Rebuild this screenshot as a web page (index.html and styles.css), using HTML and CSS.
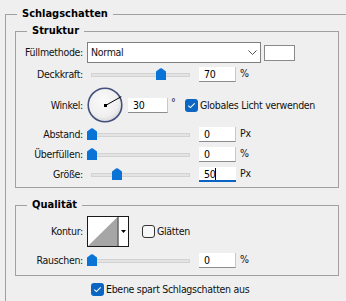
FILE: index.html
```html
<!DOCTYPE html>
<html lang="de">
<head>
<meta charset="utf-8">
<title>Schlagschatten</title>
<link rel="stylesheet" href="styles.css">
</head>
<body>
<fieldset class="group outer">
  <legend>Schlagschatten</legend>

  <fieldset class="group inner struktur">
    <legend>Struktur</legend>

    <div class="row r-fill">
      <span class="lbl">Füllmethode:</span>
      <div class="select">
        <span class="sel-text">Normal</span>
        <svg class="chev" width="9" height="5" viewBox="0 0 9 5"><polyline points="0.5,0.5 4.5,4.5 8.5,0.5" fill="none" stroke="#555" stroke-width="1"/></svg>
      </div>
      <div class="swatch"></div>
    </div>

    <div class="row r-num">
      <span class="lbl">Deckkraft:</span>
      <div class="slider">
        <div class="track"></div>
        <svg class="thumb" style="left:69px" width="10" height="12" viewBox="0 0 10 12"><path d="M4 0.6 Q5 0 6 0.6 L10 3.6 V12 H0 V3.6 Z" fill="#0a74d6"/></svg>
      </div>
      <div class="num">70</div>
      <span class="unit">%</span>
    </div>

    <div class="row r-angle">
      <span class="lbl">Winkel:</span>
      <svg class="dial" width="36" height="36" viewBox="0 0 36 36">
        <defs>
          <radialGradient id="dg" cx="45%" cy="40%" r="60%">
            <stop offset="0" stop-color="#fbfbfb"/>
            <stop offset="0.75" stop-color="#efefef"/>
            <stop offset="1" stop-color="#d8d8d8"/>
          </radialGradient>
        </defs>
        <circle cx="18" cy="18" r="16.8" fill="url(#dg)" stroke="#43507c" stroke-width="1.6"/>
        <line x1="18.5" y1="18.5" x2="34.3" y2="9.6" stroke="#000" stroke-width="1"/>
        <rect x="17" y="17" width="3" height="3" fill="#000"/>
      </svg>
      <div class="num num-wide">30</div>
      <span class="deg">°</span>
      <span class="check on"><svg width="13" height="13" viewBox="0 0 13 13"><polyline points="3.3,6.6 5.4,8.6 9.7,4.4" fill="none" stroke="#fff" stroke-width="1.1"/></svg></span>
      <span class="check-text">Globales Licht verwenden</span>
    </div>

    <div class="row r-num">
      <span class="lbl">Abstand:</span>
      <div class="slider">
        <div class="track"></div>
        <svg class="thumb" style="left:0px" width="10" height="12" viewBox="0 0 10 12"><path d="M4 0.6 Q5 0 6 0.6 L10 3.6 V12 H0 V3.6 Z" fill="#0a74d6"/></svg>
      </div>
      <div class="num">0</div>
      <span class="unit">Px</span>
    </div>

    <div class="row r-num">
      <span class="lbl">Überfüllen:</span>
      <div class="slider">
        <div class="track"></div>
        <svg class="thumb" style="left:0px" width="10" height="12" viewBox="0 0 10 12"><path d="M4 0.6 Q5 0 6 0.6 L10 3.6 V12 H0 V3.6 Z" fill="#0a74d6"/></svg>
      </div>
      <div class="num">0</div>
      <span class="unit">%</span>
    </div>

    <div class="row r-num">
      <span class="lbl">Größe:</span>
      <div class="slider">
        <div class="track"></div>
        <svg class="thumb" style="left:25px" width="10" height="12" viewBox="0 0 10 12"><path d="M4 0.6 Q5 0 6 0.6 L10 3.6 V12 H0 V3.6 Z" fill="#0a74d6"/></svg>
      </div>
      <div class="num focused">50<span class="caret"></span></div>
      <span class="unit">Px</span>
    </div>
  </fieldset>

  <fieldset class="group inner quality">
    <legend>Qualität</legend>

    <div class="row r-contour">
      <span class="lbl">Kontur:</span>
      <svg class="contour" width="42" height="31" viewBox="0 0 42 31">
        <rect x="0.5" y="0.5" width="41" height="30" fill="#fff" stroke="#1a1a1a"/>
        <polygon points="1,30 30.5,1 30.5,30" fill="#a6a6a6"/>
        <line x1="31" y1="0.5" x2="31" y2="30.5" stroke="#1a1a1a" stroke-width="1"/>
        <polygon points="34,14 39,14 36.5,17" fill="#000"/>
      </svg>
      <span class="check off"></span>
      <span class="check-text">Glätten</span>
    </div>

    <div class="row r-num">
      <span class="lbl">Rauschen:</span>
      <div class="slider">
        <div class="track"></div>
        <svg class="thumb" style="left:0px" width="10" height="12" viewBox="0 0 10 12"><path d="M4 0.6 Q5 0 6 0.6 L10 3.6 V12 H0 V3.6 Z" fill="#0a74d6"/></svg>
      </div>
      <div class="num">0</div>
      <span class="unit">%</span>
    </div>
  </fieldset>

  <div class="row r-bottom">
    <span class="check on"><svg width="13" height="13" viewBox="0 0 13 13"><polyline points="3.3,6.6 5.4,8.6 9.7,4.4" fill="none" stroke="#fff" stroke-width="1.1"/></svg></span>
    <span class="check-text">Ebene spart Schlagschatten aus</span>
  </div>
</fieldset>
</body>
</html>
```

FILE: styles.css
```css
* { box-sizing: border-box; }

html, body {
  margin: 0;
  padding: 0;
}

body {
  width: 346px;
  height: 301px;
  overflow: hidden;
  background: #efefef;
  color: #111;
  font-family: "DejaVu Sans Condensed", "DejaVu Sans", sans-serif;
  font-stretch: condensed;
  font-size: 10.5px;
  letter-spacing: -0.3px;
  line-height: 15px;
}

.group {
  border: 1px solid #a0a0a0;
  margin: 0;
  padding: 0;
  min-width: 0;
}

.group > legend {
  font-size: 11px;
  letter-spacing: 0;
  font-weight: bold;
  color: #000;
  padding: 0 5px;
  margin-left: 11px;
  height: 14px;
  line-height: 14px;
}

.outer {
  margin: 7px 0 0 5px;
  width: 360px;
  height: 320px;
}

.inner {
  margin: 3px 0 0 9px;
  width: 324px;
  display: flex;
  flex-direction: column;
}

.struktur {
  padding: 4px 0 4px 0;
  gap: 4px;
}

.quality {
  margin-top: 10px;
  padding: 4px 0 6px 0;
  gap: 6px;
}

.row {
  display: flex;
  align-items: center;
}

.lbl {
  flex: none;
  width: 67px;
  margin-right: 4px;
  text-align: right;
  white-space: nowrap;
}

/* Füllmethode */
.r-fill { height: 21px; }

.select {
  width: 174px;
  height: 21px;
  background: #fff;
  border: 1px solid #7f7f7f;
  display: flex;
  align-items: center;
  padding-left: 3px;
}

.sel-text { flex: 1; }

.chev { margin-right: 3px; }

.swatch {
  width: 31px;
  height: 16px;
  margin-left: 3px;
  background: #fff;
  border: 1px solid #8a8a8a;
}

/* numeric rows */
.r-num {
  height: 16px;
  align-items: flex-start;
}

.r-num .lbl { line-height: 15px; }

.slider {
  position: relative;
  flex: none;
  width: 108px;
  height: 15px;
  margin-right: 4px;
}

.track {
  margin: 6px 0 0 4px;
  width: 99px;
  height: 4px;
  background: #e3e3e3;
  border: 1px solid #d3d3d3;
}

.thumb {
  position: absolute;
  top: 1px;
}

.num {
  flex: none;
  width: 37px;
  height: 15px;
  background: #fff;
  border-bottom: 1px solid #8c8c8c;
  border-right: 1px solid #c8c8c8;
  padding-left: 5px;
  line-height: 14px;
  color: #000;
  display: flex;
  align-items: center;
}

.num.focused {
  border-bottom: 2px solid #0a64c4;
  border-right: none;
}

.caret {
  width: 1px;
  height: 12px;
  background: #000;
  margin-left: 0;
}

.unit {
  margin-left: 4px;
  line-height: 12px;
}

/* Winkel */
.r-angle { height: 36px; }

.dial {
  flex: none;
  display: block;
}

.num-wide {
  width: 40px;
  margin-left: 5px;
}

.deg {
  width: 14px;
  margin-left: 3px;
  align-self: flex-start;
  margin-top: 8px;
}

.check {
  flex: none;
  width: 13px;
  height: 13px;
  border-radius: 3px;
  display: block;
}

.check svg { display: block; }

.check.on { background: #0b65c2; }

.check.off {
  background: #f7f7f7;
  border: 1px solid #333;
}

.check-text {
  margin-left: 2px;
  white-space: nowrap;
}

/* Qualität */
.r-contour { height: 31px; }

.contour {
  flex: none;
  display: block;
}

.r-contour .check { margin-left: 13px; }

/* bottom */
.r-bottom {
  margin: 7px 0 0 85px;
  height: 13px;
}
```
